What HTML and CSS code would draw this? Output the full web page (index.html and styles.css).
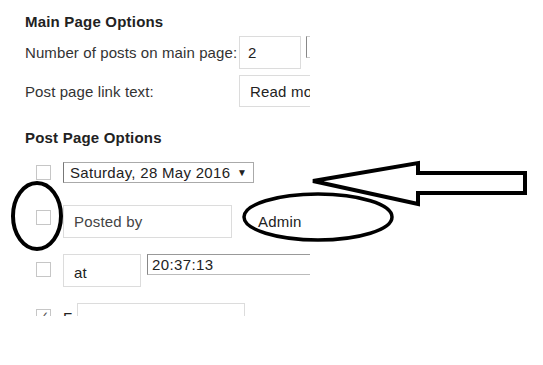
FILE: index.html
```html
<html>
<head>
	<title>Post options</title>
	<link rel="stylesheet" href="styles.css">
</head>
<body>
  <div class="stage">
    <div class="panel">
      <h3 class="section-title first">Main Page Options</h3>
      <div class="opt-grid">
        <label class="opt-label">Number of posts on main page:</label>
        <div class="opt-field">
          <span class="text-box num-box">2</span>
          <span class="unit-box"></span>
        </div>
        <label class="opt-label">Post page link text:</label>
        <div class="opt-field">
          <span class="text-box link-box">Read more</span>
        </div>
      </div>

      <h3 class="section-title second">Post Page Options</h3>
      <div class="post-rows">
        <div class="post-row row-date">
          <span class="check"></span>
          <span class="select-box">Saturday, 28 May 2016 <span class="caret">&#9660;</span></span>
        </div>
        <div class="post-row row-author">
          <span class="check"></span>
          <span class="text-box author-box">Posted by</span>
          <span class="plain-value">Admin</span>
        </div>
        <div class="post-row row-time">
          <span class="check"></span>
          <span class="text-box at-box">at</span>
          <span class="time-box">20:37:13</span>
        </div>
        <div class="post-row row-more">
          <span class="check checked">&#10003;</span>
          <span class="tiny-label">F</span>
          <span class="text-box more-box"></span>
        </div>
      </div>
    </div>

    <!-- hand drawn marks over the screenshot -->
    <svg class="marks" width="543" height="365" viewBox="0 0 543 365">
      <ellipse cx="37" cy="216" rx="24" ry="33" fill="none" stroke="#000" stroke-width="4"/>
      <ellipse cx="318" cy="217" rx="74" ry="23" fill="none" stroke="#000" stroke-width="3.5"/>
      <polygon points="313,181 418,163 418,173 525,173 525,193 418,193 418,204" fill="#fff" stroke="#000" stroke-width="4" stroke-linejoin="miter"/>
    </svg>
  </div>
</body>
</html>
```

FILE: styles.css
```css
body {
	margin: 0;
	padding: 0;
	background-color: #fff;
	font-family: "Liberation Sans", Arial, sans-serif;
	color: #222;
}
.stage {
	position: relative;
	width: 543px;
	height: 365px;
}
.panel {
	width: 310px;
	height: 316px;
	overflow: hidden;
	padding-left: 25px;
	box-sizing: border-box;
}
.section-title {
	margin: 0;
	font-size: 15px;
	font-weight: bold;
	letter-spacing: 0.2px;
	line-height: 16px;
	color: #222;
}
.section-title.first {
	padding-top: 14px;
}
.section-title.second {
	margin-top: 23px;
}
.opt-grid {
	display: grid;
	grid-template-columns: 214px auto;
	row-gap: 6px;
	margin-top: 6px;
	align-items: center;
}
.opt-label {
	font-size: 15px;
	letter-spacing: 0.1px;
	color: #333;
	white-space: nowrap;
}
.opt-field {
	display: flex;
	gap: 5px;
	align-items: flex-start;
}
.text-box {
	flex: none;
	display: inline-flex;
	align-items: center;
	box-sizing: border-box;
	height: 33px;
	padding-left: 10px;
	border: 1px solid #dcdcdc;
	font-size: 15px;
	letter-spacing: 0.2px;
	color: #222;
	white-space: nowrap;
	overflow: hidden;
}
.num-box {
	width: 62px;
	padding-left: 8px;
}
.unit-box {
	flex: none;
	width: 20px;
	height: 22px;
	box-sizing: border-box;
	border: 1px solid #ccc;
	border-left-color: #888;
}
.link-box {
	width: 100px;
	height: 32px;
}
.post-rows {
	padding-left: 11px;
	margin-top: 16px;
}
.post-row {
	display: flex;
	align-items: center;
}
.check {
	flex: none;
	width: 15px;
	height: 15px;
	box-sizing: border-box;
	border: 1px solid #c6c6c6;
	margin-right: 12px;
	font-size: 12px;
	line-height: 13px;
	text-align: center;
	color: #555;
}
.select-box {
	flex: none;
	box-sizing: border-box;
	width: 191px;
	height: 21px;
	border: 1px solid #aaa;
	border-left-color: #777;
	padding: 0 6px;
	font-size: 15px;
	letter-spacing: 0.3px;
	line-height: 19px;
	color: #222;
	display: flex;
	align-items: center;
	justify-content: space-between;
	white-space: nowrap;
}
.caret {
	font-size: 10px;
	letter-spacing: 0;
}
.row-author {
	margin-top: 22px;
}
.row-author .check {
	position: relative;
	top: -4px;
}
.author-box {
	width: 169px;
	color: #444;
}
.plain-value {
	margin-left: 26px;
	font-size: 15px;
	letter-spacing: 0.2px;
	color: #222;
}
.row-time {
	margin-top: 16px;
	align-items: flex-start;
}
.row-time .check {
	margin-top: 8px;
}
.at-box {
	width: 78px;
	padding-top: 3px;
}
.time-box {
	flex: none;
	box-sizing: border-box;
	width: 180px;
	height: 21px;
	margin-left: 6px;
	border: 1px solid #bbb;
	border-top-color: #999;
	border-left-color: #888;
	padding-left: 4px;
	font-size: 15px;
	letter-spacing: 0.4px;
	line-height: 19px;
	color: #222;
}
.row-more {
	margin-top: 16px;
	align-items: flex-start;
}
.row-more .check {
	margin-top: 6px;
	margin-right: 12px;
}
.tiny-label {
	flex: none;
	font-size: 15px;
	margin-top: 6px;
	width: 14px;
}
.more-box {
	width: 168px;
}
.marks {
	position: absolute;
	left: 0;
	top: 0;
}
```
